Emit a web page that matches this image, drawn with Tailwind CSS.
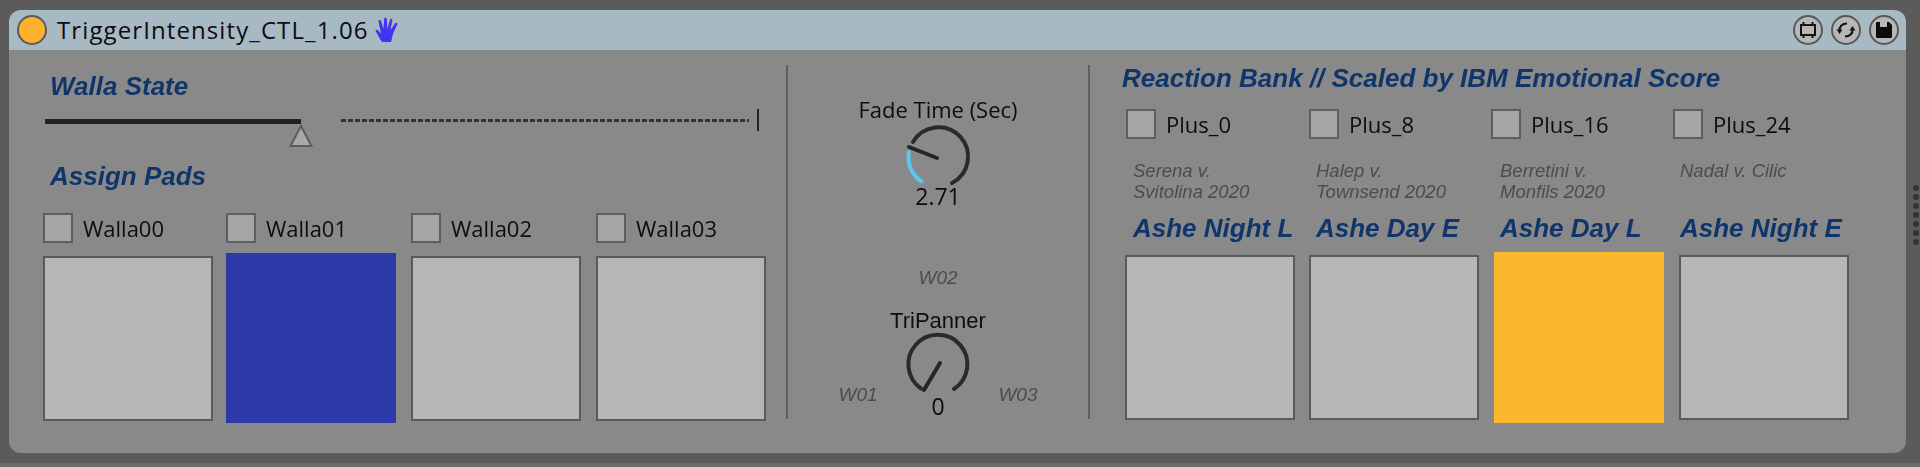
<!DOCTYPE html>
<html lang="en">
<head>
    <meta charset="UTF-8">
    <title>TriggerIntensity_CTL_1.06</title>
    <script src="https://cdn.jsdelivr.net/npm/@tailwindcss/browser@4"></script>
</head>
<body class="bg-[#5b5b5b] font-['Open_Sans',sans-serif] text-[#0d0d0d]">
    <div class="w-[1920px] h-[467px] overflow-hidden flex flex-col blur-[0.4px]">
        <div class="flex h-[463px] pt-[10px] pl-[9px]">
            <!-- device -->
            <div class="w-[1897px] h-[443px] rounded-[12px] overflow-hidden bg-[#898989] flex flex-col">
                <!-- title bar -->
                <div class="h-[40px] shrink-0 bg-[#a7b9c3] flex items-center pl-[8px] pr-[7px]">
                    <div class="w-[30px] h-[30px] rounded-full bg-[#fdb12f] border-2 border-[#5a5a5a]"></div>
                    <div class="ml-[10px] text-[24px] leading-none tracking-[1.1px]">TriggerIntensity_CTL_1.06</div>
                    <svg class="ml-[6px]" width="24" height="26" viewBox="0 0 24 26" fill="#4433f0">
                        <path d="M7 25 C4 21 3 18 .8 14.5 C0 13 1.8 12 3 13.2 L6 16.5 L3.6 4.5 C3.3 2.8 5.6 2.3 6.1 4 L8.4 12 L9.2 2 C9.3 .2 11.7 .2 11.8 2 L12.3 12 L15 2.8 C15.5 1.2 17.7 1.8 17.3 3.6 L15.4 13 L20.2 6.2 C21.2 5 23 6 22.2 7.6 L18.5 15.5 C17.5 18 17 22 16 25 Z"/>
                    </svg>
                    <div class="ml-auto flex gap-[8px]">
                        <div class="w-[30px] h-[30px] rounded-full bg-[#b7b7b7] border-2 border-[#585858] flex items-center justify-center">
                            <svg width="18" height="18" viewBox="0 0 18 18" fill="none" stroke="#141414" stroke-width="2">
                                <rect x="2" y="4" width="14" height="10"/>
                                <path d="M4.5 1v3M13.5 1v3M4.5 14v3M13.5 14v3"/>
                            </svg>
                        </div>
                        <div class="w-[30px] h-[30px] rounded-full bg-[#b7b7b7] border-2 border-[#585858] flex items-center justify-center">
                            <svg width="20" height="20" viewBox="0 0 20 20" fill="none" stroke="#141414" stroke-width="2.2">
                                <path d="M3.5 11 C3 6.5 6.5 3.5 11 3.5"/>
                                <path d="M16.5 9 C17 13.5 13.5 16.5 9 16.5"/>
                                <path d="M.5 9.5 L6.5 9.5 L3.5 14 Z" fill="#141414" stroke="none"/>
                                <path d="M13.5 10.5 L19.5 10.5 L16.5 6 Z" fill="#141414" stroke="none"/>
                            </svg>
                        </div>
                        <div class="w-[30px] h-[30px] rounded-full bg-[#b7b7b7] border-2 border-[#585858] flex items-center justify-center">
                            <svg width="18" height="18" viewBox="0 0 18 18">
                                <path d="M1 2 Q1 1 2 1 L14 1 L17 4 L17 16 Q17 17 16 17 L2 17 Q1 17 1 16 Z" fill="#0c0c0c"/>
                                <rect x="5" y="1" width="7" height="5" fill="#b7b7b7"/>
                            </svg>
                        </div>
                    </div>
                </div>

                <div class="flex pt-[15px]">
                    <!-- left section -->
                    <div class="w-[777px] h-[354px] pl-[34px]">
                        <div class="pl-[7px] pt-[6px] text-[26px] leading-[30px] font-bold italic font-['Liberation_Sans',sans-serif] text-[#10356b]">Walla State</div>
                        <div class="flex mt-[8px] h-[40px]">
                            <div class="ml-[2px] w-[256px] h-[5px] mt-[10px] bg-[#222222]"></div>
                            <svg class="-ml-[12px] mt-[15px]" width="24" height="24" viewBox="0 0 24 24">
                                <path d="M12 2 L22.5 22 L1.5 22 Z" fill="#a8a8a8" stroke="#5c5c5c" stroke-width="2"/>
                            </svg>
                            <div class="ml-[28px] w-[408px] mt-[10px] h-[3px] bg-[repeating-linear-gradient(90deg,#333333_0_5px,transparent_5px_7px)]"></div>
                            <div class="ml-[8px] w-[2px] h-[22px] bg-[#262626]"></div>
                        </div>
                        <div class="pl-[7px] mt-[12px] text-[26px] leading-[30px] font-bold italic font-['Liberation_Sans',sans-serif] text-[#10356b]">Assign Pads</div>
                        <div class="grid grid-cols-[183px_185px_185px_170px] mt-[22px] text-[22px] leading-[30px]">
                            <div class="flex gap-[10px]"><div class="w-[30px] h-[30px] bg-[#a6a6a6] border-2 border-[#5e5e5e]"></div><span>Walla00</span></div>
                            <div class="flex gap-[10px]"><div class="w-[30px] h-[30px] bg-[#a6a6a6] border-2 border-[#5e5e5e]"></div><span>Walla01</span></div>
                            <div class="flex gap-[10px]"><div class="w-[30px] h-[30px] bg-[#a6a6a6] border-2 border-[#5e5e5e]"></div><span>Walla02</span></div>
                            <div class="flex gap-[10px]"><div class="w-[30px] h-[30px] bg-[#a6a6a6] border-2 border-[#5e5e5e]"></div><span>Walla03</span></div>
                        </div>
                        <div class="grid grid-cols-[183px_185px_185px_170px] mt-[10px]">
                            <div class="w-[170px] h-[165px] mt-[3px] bg-[#b6b6b6] border-2 border-[#5a5a5a]"></div>
                            <div class="w-[170px] h-[170px] bg-[#2d39a8]"></div>
                            <div class="w-[170px] h-[165px] mt-[3px] bg-[#b6b6b6] border-2 border-[#5a5a5a]"></div>
                            <div class="w-[170px] h-[165px] mt-[3px] bg-[#b6b6b6] border-2 border-[#5a5a5a]"></div>
                        </div>
                    </div>

                    <div class="w-[2px] h-[354px] bg-[#5f5f5f]"></div>

                    <!-- center section -->
                    <div class="w-[300px] h-[354px] flex flex-col items-center">
                        <div class="mt-[32px] text-[22px] leading-[24px] whitespace-nowrap">Fade Time (Sec)</div>
                        <svg class="mt-[1px]" width="70" height="70" viewBox="0 0 70 70" fill="none" stroke-width="4" stroke-linecap="round">
                            <path d="M 10 20 A 29.5 29.5 0 1 1 49 61" stroke="#2a2a2a"/>
                            <path d="M 5.8 30 A 29.5 29.5 0 0 0 18.5 59.5" stroke="#5cc8f0"/>
                            <path d="M 6 25 L 34 36" stroke="#262626"/>
                        </svg>
                        <div class="-mt-[8px] text-[23px] leading-[24px]">2.71</div>
                        <div class="mt-[59px] text-[19px] leading-[22px] italic font-['Liberation_Sans',sans-serif] text-[#4c4c4c]">W02</div>
                        <div class="mt-[20px] text-[22px] leading-[24px] font-['Liberation_Sans',sans-serif]">TriPanner</div>
                        <div class="flex w-[199px] justify-between items-end -mt-[3px]">
                            <span class="-mb-[6px] text-[19px] leading-[22px] italic font-['Liberation_Sans',sans-serif] text-[#4c4c4c]">W01</span>
                            <svg width="70" height="70" viewBox="0 0 70 70" fill="none" stroke-width="4" stroke-linecap="round">
                                <path d="M 18 58.5 A 29.5 29.5 0 1 1 51 59" stroke="#2a2a2a"/>
                                <path d="M 37 33 L 21 60" stroke="#262626"/>
                            </svg>
                            <span class="-mb-[6px] text-[19px] leading-[22px] italic font-['Liberation_Sans',sans-serif] text-[#4c4c4c]">W03</span>
                        </div>
                        <div class="-mt-[6px] text-[23px] leading-[24px]">0</div>
                    </div>

                    <div class="w-[2px] h-[354px] bg-[#5f5f5f]"></div>

                    <!-- right section -->
                    <div class="pl-[32px]">
                        <div class="-mt-[2px] text-[26px] leading-[30px] font-bold italic font-['Liberation_Sans',sans-serif] text-[#10356b] whitespace-nowrap">Reaction Bank // Scaled by IBM Emotional Score</div>
                        <div class="grid grid-cols-[183px_182px_182px_160px] ml-[4px] mt-[16px] text-[22px] leading-[30px]">
                            <div class="flex gap-[10px]"><div class="w-[30px] h-[30px] bg-[#a6a6a6] border-2 border-[#5e5e5e]"></div><span>Plus_0</span></div>
                            <div class="flex gap-[10px]"><div class="w-[30px] h-[30px] bg-[#a6a6a6] border-2 border-[#5e5e5e]"></div><span>Plus_8</span></div>
                            <div class="flex gap-[10px]"><div class="w-[30px] h-[30px] bg-[#a6a6a6] border-2 border-[#5e5e5e]"></div><span>Plus_16</span></div>
                            <div class="flex gap-[10px]"><div class="w-[30px] h-[30px] bg-[#a6a6a6] border-2 border-[#5e5e5e]"></div><span>Plus_24</span></div>
                        </div>
                        <div class="grid grid-cols-[183px_184px_180px_170px] mt-[21px] pl-[11px] text-[18.5px] leading-[21px] italic font-['Liberation_Sans',sans-serif] text-[#4c4c4c] h-[42px]">
                            <div>Serena v.<br>Svitolina 2020</div>
                            <div>Halep v.<br>Townsend 2020</div>
                            <div>Berretini v.<br>Monfils 2020</div>
                            <div>Nadal v. Cilic</div>
                        </div>
                        <div class="grid grid-cols-[183px_184px_180px_170px] mt-[11px] pl-[11px] text-[26px] leading-[30px] font-bold italic font-['Liberation_Sans',sans-serif] text-[#10356b] whitespace-nowrap">
                            <div>Ashe Night L</div>
                            <div>Ashe Day E</div>
                            <div>Ashe Day L</div>
                            <div>Ashe Night E</div>
                        </div>
                        <div class="grid grid-cols-[184px_185px_185px_170px] mt-[9px] pl-[3px]">
                            <div class="w-[170px] h-[165px] mt-[3px] bg-[#b6b6b6] border-2 border-[#5a5a5a]"></div>
                            <div class="w-[170px] h-[165px] mt-[3px] bg-[#b6b6b6] border-2 border-[#5a5a5a]"></div>
                            <div class="w-[170px] h-[171px] bg-[#f9b82e]"></div>
                            <div class="w-[170px] h-[165px] mt-[3px] bg-[#b6b6b6] border-2 border-[#5a5a5a]"></div>
                        </div>
                    </div>
                </div>
            </div>
            <!-- resize grip -->
            <div class="ml-[7px] mt-[175px] flex flex-col gap-[3px]">
                <div class="w-[6px] h-[6px] rounded-full bg-[#333333]"></div>
                <div class="w-[6px] h-[6px] rounded-full bg-[#333333]"></div>
                <div class="w-[6px] h-[6px] rounded-full bg-[#333333]"></div>
                <div class="w-[6px] h-[6px] rounded-full bg-[#333333]"></div>
                <div class="w-[6px] h-[6px] rounded-full bg-[#333333]"></div>
                <div class="w-[6px] h-[6px] rounded-full bg-[#333333]"></div>
                <div class="w-[6px] h-[6px] rounded-full bg-[#333333]"></div>
            </div>
        </div>
        <div class="h-[4px] bg-[#6b6b6b]"></div>
    </div>
</body>
</html>
